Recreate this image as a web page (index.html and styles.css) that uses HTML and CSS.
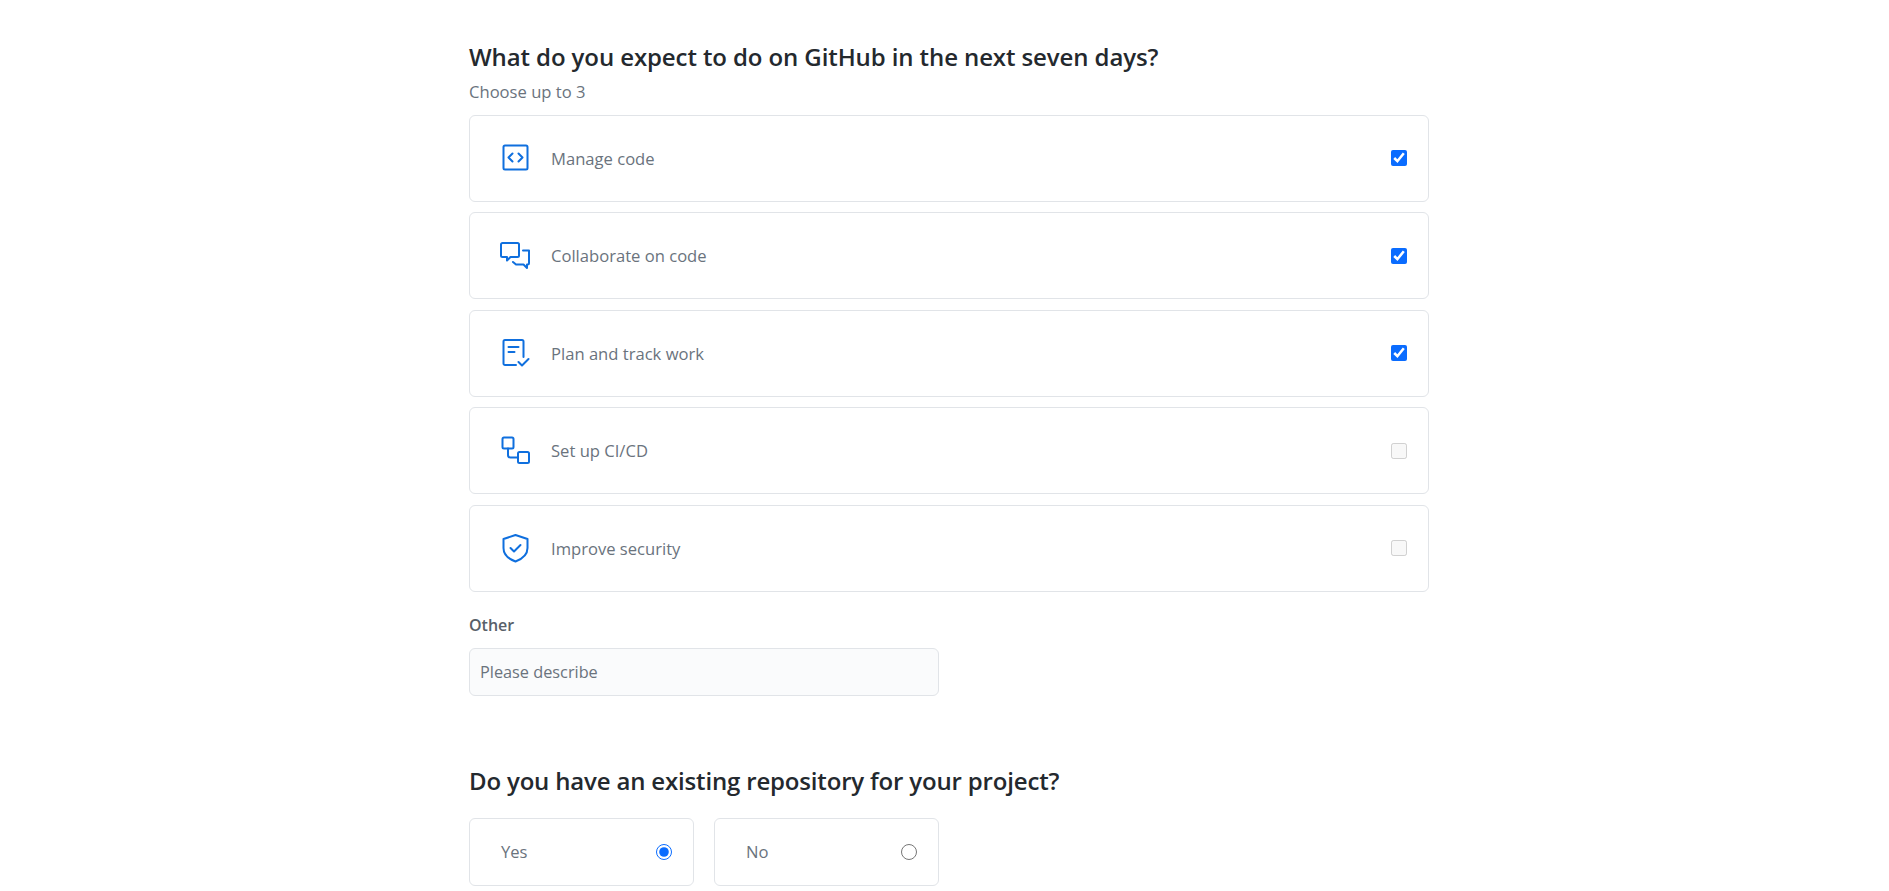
FILE: index.html
```html
<!DOCTYPE html>
<html lang="en">
<head>
    <meta charset="UTF-8">
    <meta name="viewport" content="width=device-width, initial-scale=1.0">
    <title>Survey</title>
    <link rel="stylesheet" href="styles.css">
</head>
<body>
    <main class="survey">
        <!-- Goals -->
        <section class="question">
            <h2 class="question-title">What do you expect to do on GitHub in the next seven days?</h2>
            <p class="question-hint">Choose up to 3</p>

            <label class="option">
                <svg class="option-icon" viewBox="0 0 32 32"><rect x="3.500" y="3.500" width="24" height="24" rx="1.500"/><path d="M12.500 11.500l-4 4 4 4M18.500 11.500l4 4-4 4"/></svg>
                <span class="option-text">Manage code</span>
                <input type="checkbox" checked>
            </label>
            <label class="option">
                <svg class="option-icon" viewBox="0 0 32 32"><path d="M2.500 3h15A1.500 1.500 0 0 1 19 4.500v11a1.500 1.500 0 0 1-1.500 1.500H10.500L7 20.500V17H2.500A1.500 1.500 0 0 1 1 15.500v-11A1.500 1.500 0 0 1 2.500 3z"/><path d="M23 10.500h6v12.500a1.500 1.500 0 0 1-1.500 1.500H27V28l-3.500-3.500H16L13 22"/></svg>
                <span class="option-text">Collaborate on code</span>
                <input type="checkbox" checked>
            </label>
            <label class="option">
                <svg class="option-icon" viewBox="0 0 32 32"><path d="M16 28H5A1.500 1.500 0 0 1 3.500 26.500v-22A1.500 1.500 0 0 1 5 3h17a1.500 1.500 0 0 1 1.500 1.500V20"/><path d="M8.500 10h10M8.500 15h6M18.500 25l3.500 3.500 6.500-6.500"/></svg>
                <span class="option-text">Plan and track work</span>
                <input type="checkbox" checked>
            </label>
            <label class="option">
                <svg class="option-icon" viewBox="0 0 32 32"><rect x="2.500" y="2.500" width="11" height="11" rx="1.500"/><rect x="18" y="17" width="11" height="11" rx="1.500"/><path d="M8 13.500V20a2.500 2.500 0 0 0 2.500 2.500H18"/></svg>
                <span class="option-text">Set up CI/CD</span>
                <input type="checkbox" disabled>
            </label>
            <label class="option">
                <svg class="option-icon" viewBox="0 0 32 32"><path d="M15.500 3l12 4v9c0 6-4 10.500-12 13.500C7.500 26.500 3.500 22 3.500 16V7z"/><path d="M10.500 16l3.500 3.500L20.500 13"/></svg>
                <span class="option-text">Improve security</span>
                <input type="checkbox" disabled>
            </label>

            <label class="other-label" for="other">Other</label>
            <input class="other-input" type="text" id="other" placeholder="Please describe">
        </section>

        <!-- Repository -->
        <section class="question question-repo">
            <h2 class="question-title">Do you have an existing repository for your project?</h2>
            <div class="radio-row">
                <label class="radio-card">
                    <span class="option-text">Yes</span>
                    <input type="radio" name="repo" checked>
                </label>
                <label class="radio-card">
                    <span class="option-text">No</span>
                    <input type="radio" name="repo">
                </label>
            </div>
        </section>
    </main>
</body>
</html>
```

FILE: styles.css
```css
html, body { margin: 0; height: 891px; overflow: hidden; background-color: #fff; }
body { padding-left: 9px; font-family: "Open Sans", "Noto Sans", sans-serif; color: #24292e; }
.survey { width: 960px; margin: 0 auto; padding: 39px 0 0; }
.question-title { margin: 0; font-size: 24px; line-height: 36px; font-weight: 600; letter-spacing: -0.1px; }
.question-hint { margin: 5px 0 10.700px; font-size: 16.6px; line-height: 24px; color: #6a737d; }
.option { display: flex; align-items: center; height: 87px; margin-bottom: 10.500px; padding: 0 21px 0 30px; box-sizing: border-box; border: 1px solid #e1e4e8; border-radius: 6px; }
.option-icon { width: 32px; height: 32px; flex: none; fill: none; stroke: #0f6fde; stroke-width: 2; stroke-linecap: round; stroke-linejoin: round; margin-right: 19px; }
.option-text { flex: 1; font-size: 16.6px; color: #6a737d; }
.option input, .radio-card input { margin: 0; width: 16px; height: 16px; flex: none; accent-color: #0a6cff; }
.other-label { display: block; margin-top: 21.300px; font-size: 16px; line-height: 24px; font-weight: 600; color: #586069; }
.other-input { display: block; width: 470px; height: 48px; margin-top: 11px; padding: 0 10px; box-sizing: border-box; font: inherit; font-size: 16.3px; background-color: #fafbfc; border: 1px solid #e1e4e8; border-radius: 6px; }
.other-input::placeholder { color: #6a737d; }
.question-repo { margin-top: 67px; }
.question-repo .question-title { letter-spacing: -0.17px; }
.radio-row { display: flex; gap: 20px; margin-top: 19px; width: 470px; }
.radio-card { display: flex; flex: 1; align-items: center; height: 68px; padding: 0 21px 0 31px; box-sizing: border-box; border: 1px solid #e1e4e8; border-radius: 6px; }
```
